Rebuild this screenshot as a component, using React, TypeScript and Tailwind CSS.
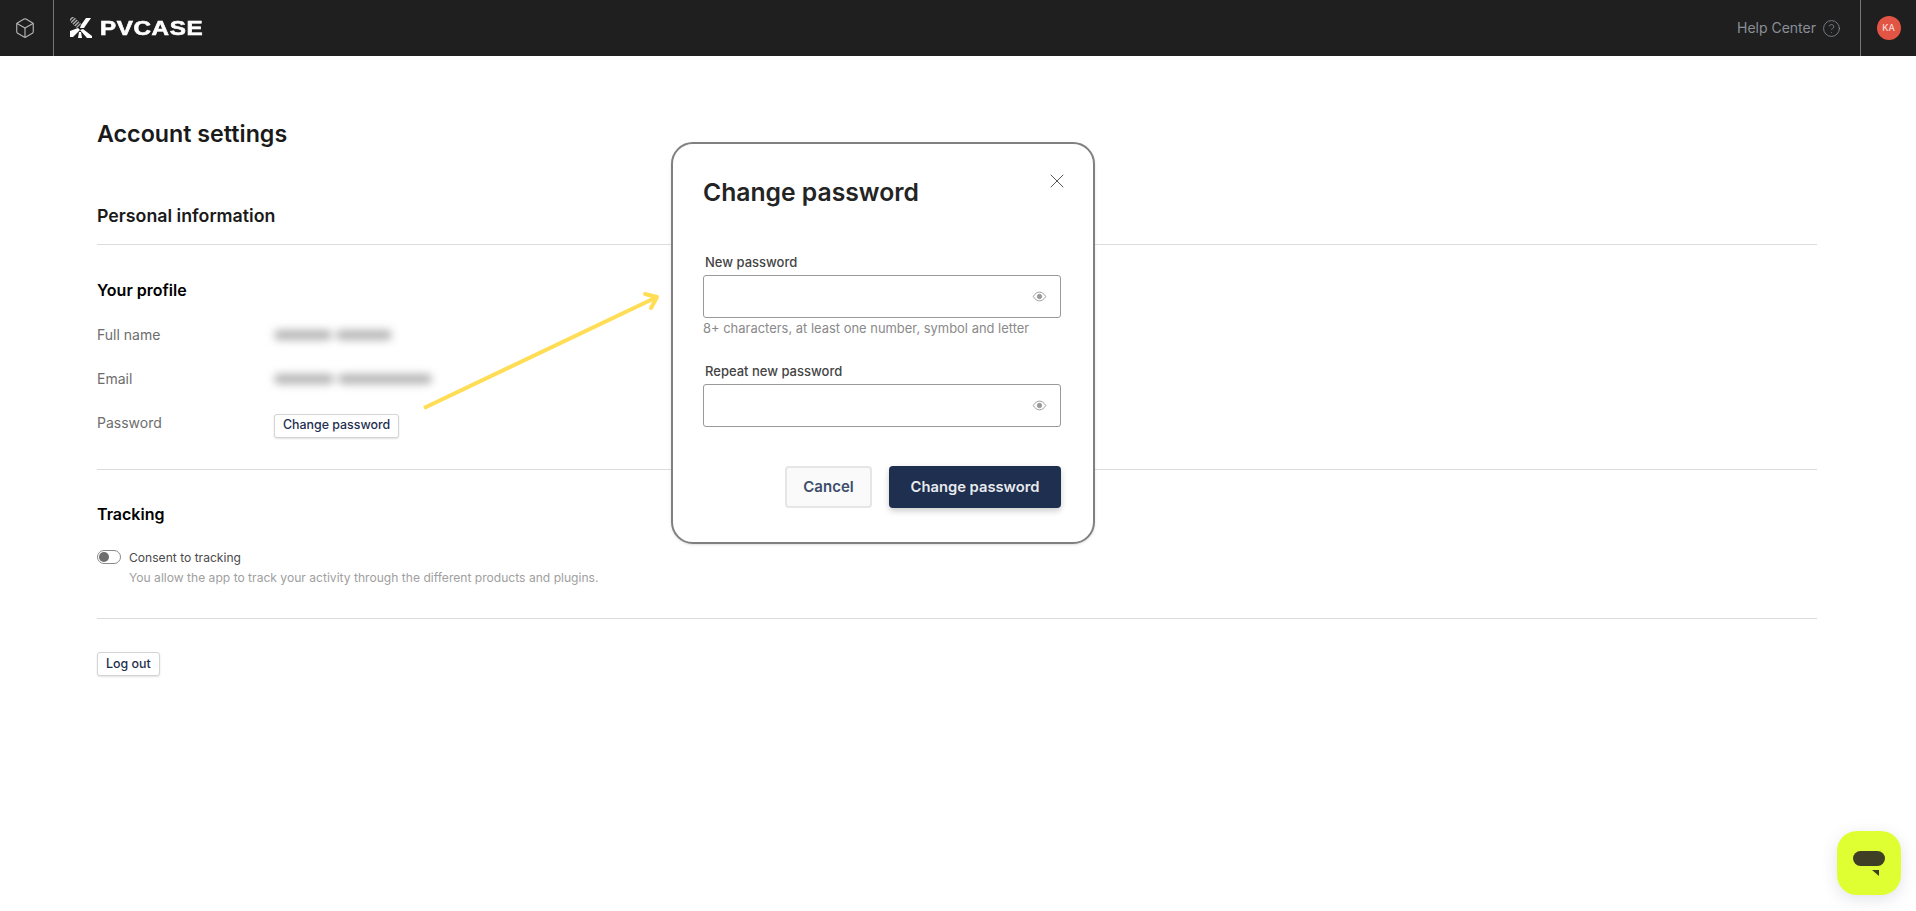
import { Box, CircleHelp, X } from 'lucide-react'

const FONT = "font-['Inter',sans-serif]"

function Logo() {
    return (
        <div className="flex items-center gap-[8px]">
            <svg width="22" height="22" viewBox="0 0 22 22">
                <path d="M1 1 L9 9" stroke="#aaa" strokeWidth="6" strokeDasharray="1.5 1" />
                <path d="M21 1 L16 1 L11 8 L10 11 L14 11 Z" fill="#fff" />
                <path d="M0 14 L8 11 L10 13 L3 20 L0 20 Z" fill="#fff" />
                <path d="M10 13 L13 12 L22 19 L22 21 L17 21 Z" fill="#fff" />
                <path d="M9 15 L11 15 L12 21 L8 21 Z" fill="#fff" />
            </svg>
            <span className="mt-[2px] origin-left scale-x-[1.24] font-['Liberation_Sans',sans-serif] text-[19.5px] leading-none font-bold tracking-[0.5px] text-white [-webkit-text-stroke:0.6px_white]">
                PVCASE
            </span>
        </div>
    )
}

function Header() {
    return (
        <header className="flex h-14 items-center bg-[#1f1f1f]">
            <div className="flex h-full w-[54px] items-center justify-center border-r border-[#777] pr-[4px]">
                <Box size={22} strokeWidth={1.25} className="text-[#b5b5b5]" />
            </div>
            <div className="ml-4">
                <Logo />
            </div>
            <div className="ml-auto flex items-center gap-[6px] pr-[19px] text-sm text-[#8a8f98]">
                <span>Help Center</span>
                <CircleHelp size={19} strokeWidth={1} />
            </div>
            <div className="flex h-full w-[56px] items-center justify-center border-l border-[#777]">
                <div className="flex h-6 w-6 items-center justify-center rounded-full bg-[#e25544] text-[9px] font-medium text-[#f8dcd8]">
                    KA
                </div>
            </div>
        </header>
    )
}

function SmallButton({ children }: { children: string }) {
    return (
        <button className="h-6 rounded-[3px] border border-[#d4d4d4] bg-white px-2 text-[12.4px] font-medium text-[#1e2f4f] shadow-[0_1px_2px_rgba(0,0,0,0.12)]">
            {children}
        </button>
    )
}

function ProfileRow({ label, children }: { label: string; children: React.ReactNode }) {
    return (
        <div className="flex h-[44px] items-center">
            <span className="w-[177px] text-sm text-[#6d6d6d]">{label}</span>
            {children}
        </div>
    )
}

function BlurredValue({ widths }: { widths: string[] }) {
    return (
        <div className="flex gap-[4px] blur-[4px]">
            {widths.map((w, i) => (
                <div key={i} className={`h-[10px] rounded-full bg-[#b4b4b4] ${w}`} />
            ))}
        </div>
    )
}

function EyeIcon() {
    return (
        <svg width="15" height="15" viewBox="0 0 24 24" fill="none" stroke="#999" strokeWidth="1.5">
            <path d="M2 12 C5 7 8.5 5 12 5 C15.5 5 19 7 22 12 C19 17 15.5 19 12 19 C8.5 19 5 17 2 12 Z" />
            <circle cx="12" cy="12" r="3.5" fill="#999" />
        </svg>
    )
}

function PasswordField({ label }: { label: string }) {
    return (
        <div>
            <label className="mb-[5px] block pl-[2px] text-[13px] leading-[16px] font-medium text-[#444]">{label}</label>
            <div className="flex h-[43px] items-center justify-end rounded-[3px] border-[1.5px] border-[#999] pr-[13px]">
                <EyeIcon />
            </div>
        </div>
    )
}

function ChangePasswordModal() {
    return (
        <div className="absolute top-[142px] left-[671px] h-[402px] w-[424px] rounded-[22px] border-2 border-[#808080] bg-white pt-[30px] pr-[32px] pl-[30px] shadow-sm">
            <div className="flex items-start justify-between">
                <h2 className="text-[24.7px] leading-[36px] font-semibold text-[#242424]">Change password</h2>
                <X size={24} strokeWidth={1} className="mt-[-5px] mr-[-8px] text-[#555]" />
            </div>
            <div className="mt-[44px]">
                <PasswordField label="New password" />
                <p className="mt-[1px] text-[12.95px] leading-[18px] text-[#8a8a8a]">
                    8+ characters, at least one number, symbol and letter
                </p>
            </div>
            <div className="mt-[26px]">
                <PasswordField label="Repeat new password" />
            </div>
            <div className="mt-[39px] flex justify-end gap-[17px]">
                <button className="h-[42px] w-[87px] rounded-[4px] border-2 border-[#e6e6e6] bg-[#fafafa] text-[15px] font-semibold text-[#3d4d6b]">
                    Cancel
                </button>
                <button className="h-[42px] w-[172px] rounded-[4px] bg-[#1e2f4f] text-[14.75px] font-semibold text-[#e8eaee] shadow-[0_3px_6px_rgba(0,0,0,0.2)]">
                    Change password
                </button>
            </div>
        </div>
    )
}

function Arrow() {
    return (
        <svg className="absolute top-[290px] left-[420px]" width="245" height="125" viewBox="0 0 245 125" fill="none">
            <path d="M4 118 L237 7" stroke="#ffdd55" strokeWidth="4" />
            <path d="M225 4 L237 7 L231 18" stroke="#ffdd55" strokeWidth="4" strokeLinecap="round" strokeLinejoin="round" />
        </svg>
    )
}

function ChatBubble() {
    return (
        <div className="absolute top-[831px] left-[1837px] flex h-[64px] w-[64px] items-center justify-center rounded-[20px] bg-[#e0ff33] shadow-[0_4px_16px_rgba(60,70,110,0.15)]">
            <svg width="34" height="26" viewBox="0 0 34 26">
                <rect x="1" y="1" width="32" height="15" rx="7.5" fill="#3f3f26" />
                <path d="M20 20 L27 20 L27 26 Z" fill="#3f3f26" />
            </svg>
        </div>
    )
}

export default function App() {
    return (
        <div className={`relative h-[911px] overflow-hidden bg-white ${FONT}`}>
            <Header />
            <main className="pr-[99px] pl-[97px]">
                <h1 className="mt-[60px] text-[23.25px] leading-9 font-semibold text-[#1a1a1a]">Account settings</h1>

                <h2 className="mt-[50px] border-b border-[#dcdcdc] pb-[14px] text-[17.75px] leading-7 font-semibold text-[#1a1a1a]">
                    Personal information
                </h2>

                <section className="border-b border-[#dcdcdc] pt-[33px] pb-[24px]">
                    <h3 className="mb-[11px] text-base leading-6 font-semibold text-black">Your profile</h3>
                    <ProfileRow label="Full name">
                        <BlurredValue widths={['w-[58px]', 'w-[56px]']} />
                    </ProfileRow>
                    <ProfileRow label="Email">
                        <BlurredValue widths={['w-[60px]', 'w-[94px]']} />
                    </ProfileRow>
                    <ProfileRow label="Password">
                        <div className="pt-[3px]">
                            <SmallButton>Change password</SmallButton>
                        </div>
                    </ProfileRow>
                </section>

                <section className="border-b border-[#dcdcdc] pt-[32px] pb-[30px]">
                    <h3 className="text-base leading-6 font-semibold text-black">Tracking</h3>
                    <div className="mt-[22px] flex gap-2">
                        <div className="mt-[2px] flex h-[14px] w-[24px] items-center rounded-full border border-[#8a8a8a] pl-[1px]">
                            <div className="h-[10px] w-[10px] rounded-full bg-[#6e6e6e]" />
                        </div>
                        <div className="text-[12.1px] leading-5">
                            <p className="text-[#4a4a4a]">Consent to tracking</p>
                            <p className="text-[#a0a0a0]">You allow the app to track your activity through the different products and plugins.</p>
                        </div>
                    </div>
                </section>

                <div className="mt-[31px]">
                    <SmallButton>Log out</SmallButton>
                </div>
            </main>
            <Arrow />
            <ChangePasswordModal />
            <ChatBubble />
        </div>
    )
}
